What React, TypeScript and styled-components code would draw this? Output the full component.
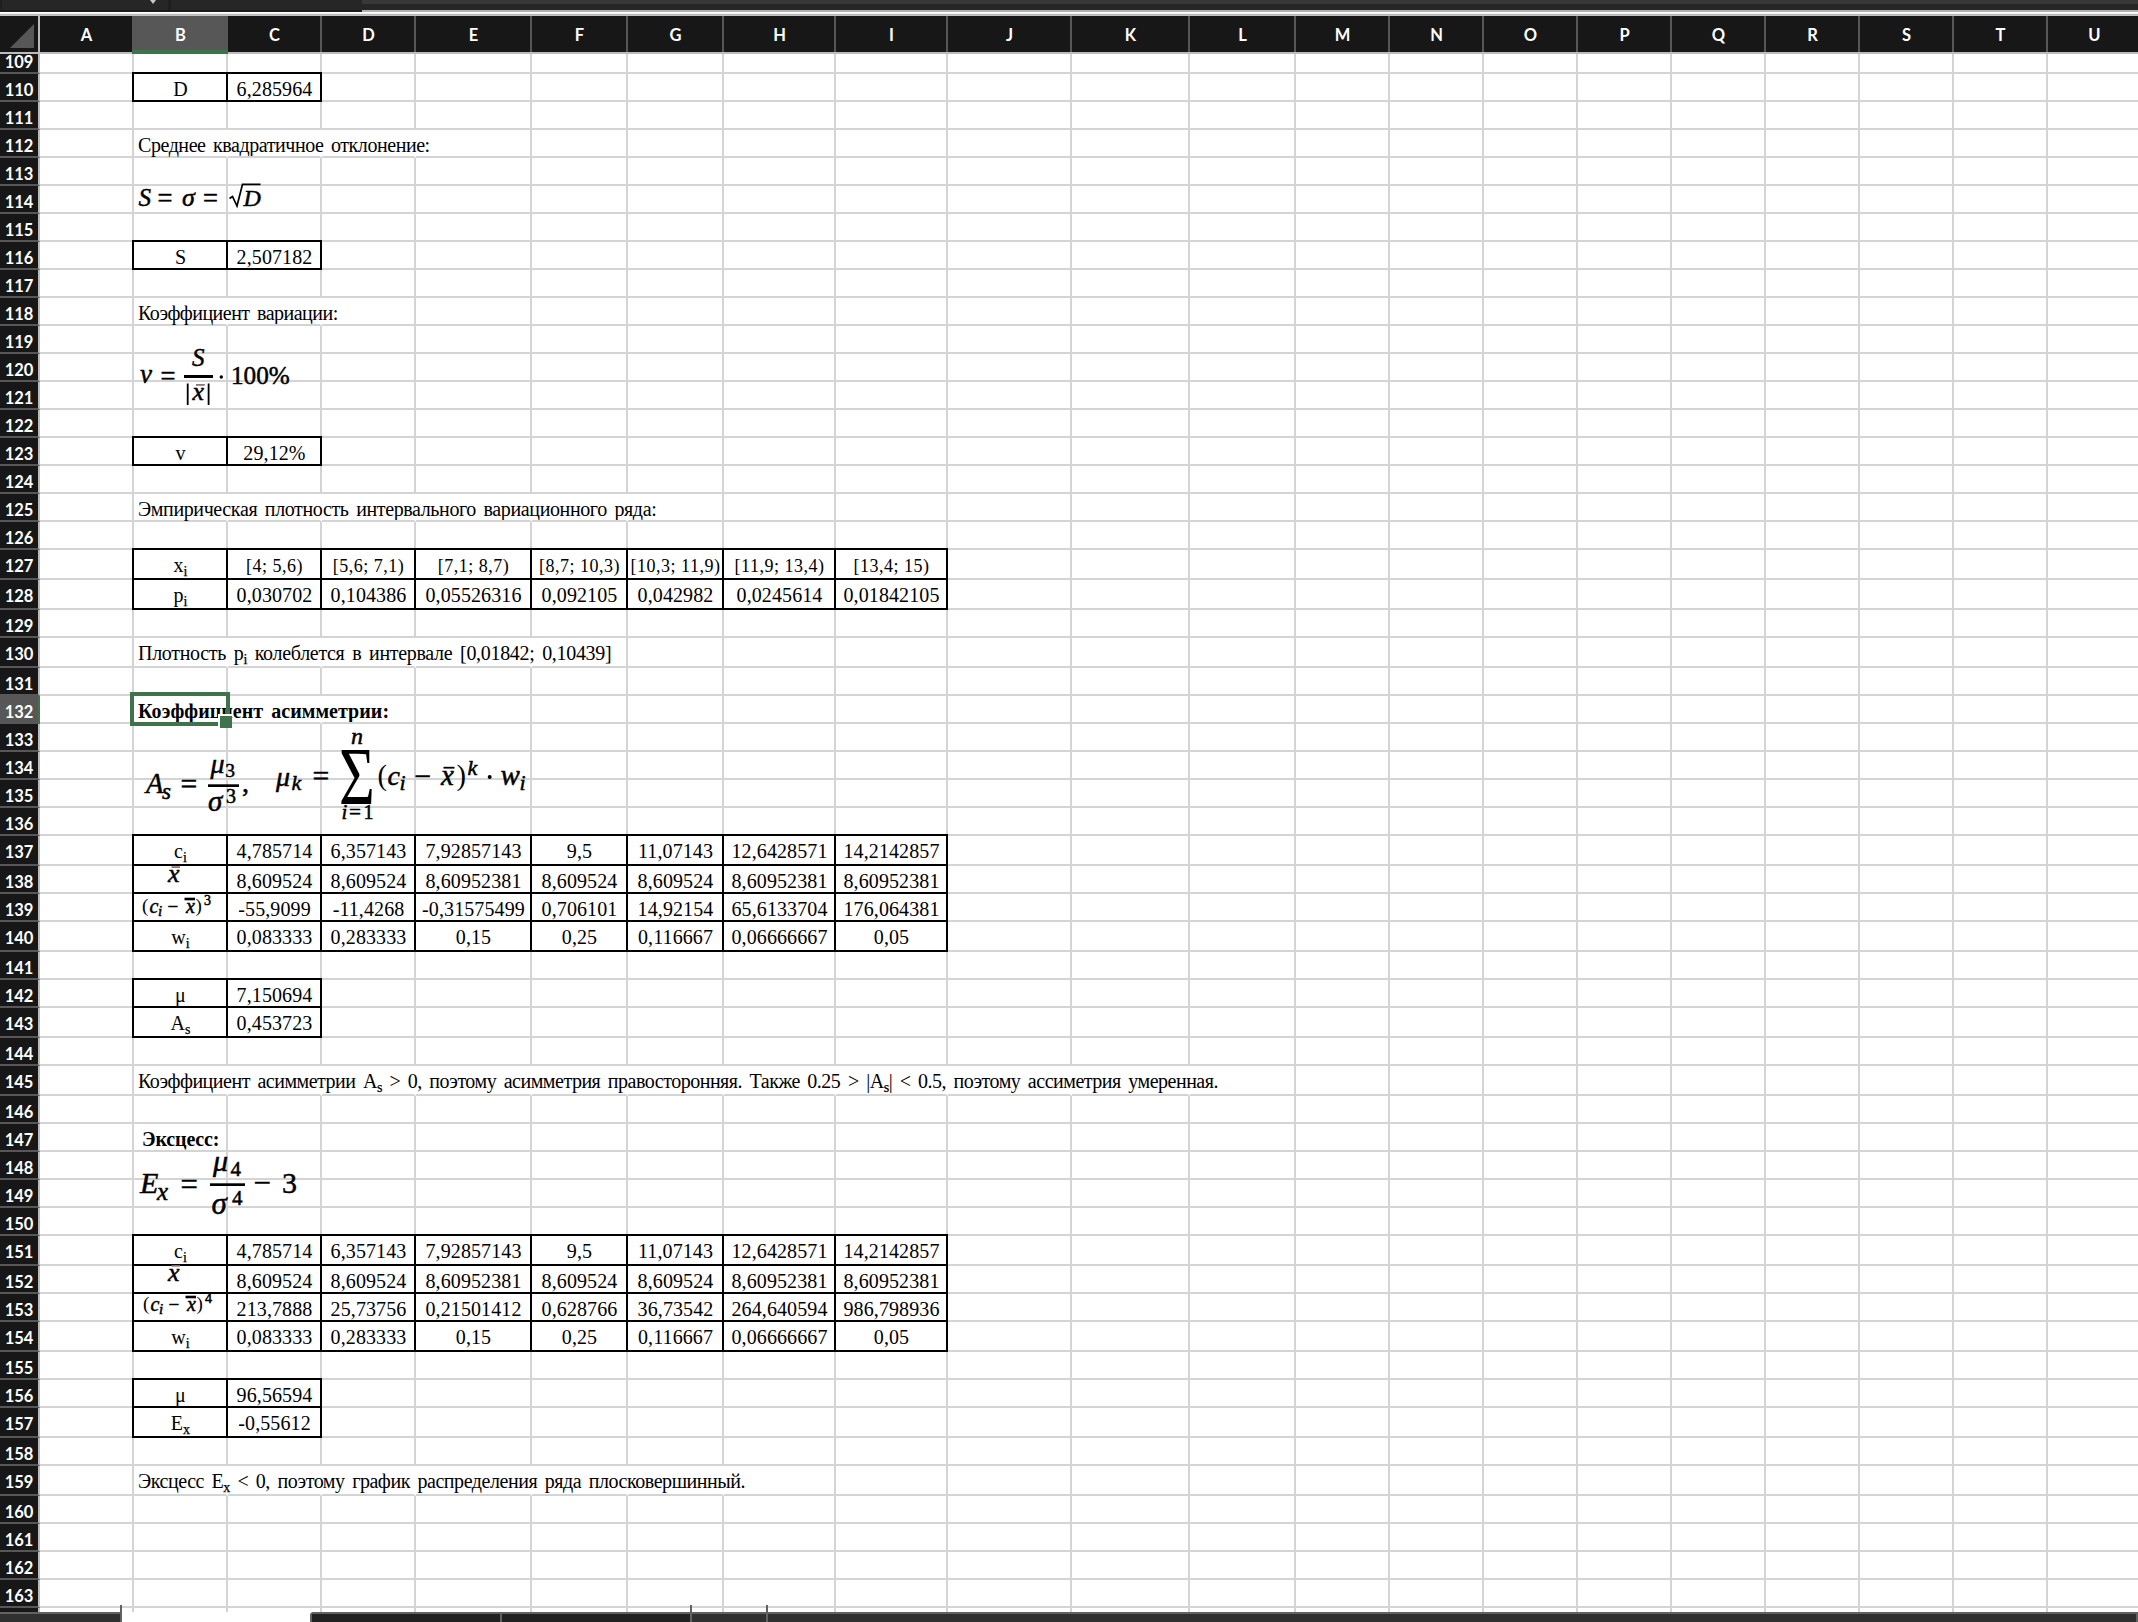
import React from 'react';
import styled, { createGlobalStyle, css } from 'styled-components';

const GREEN = '#3e734b';
const GRID = '#d4d4d4';
const HEAD = '#171717';
const HEAD_ACTIVE = '#575757';
const EDGE = '#bcbcbc';

const Global = createGlobalStyle`
  html, body { margin: 0; padding: 0; background: #fff; }
  * { box-sizing: border-box; }
`;

const Window = styled.div`
  position: relative;
  display: flex;
  flex-direction: column;
  width: 2138px;
  height: 1622px;
  overflow: hidden;
  background: #fff;
`;

/* formula bar remnant above the grid */
const TopBar = styled.div`
  display: flex;
  height: 12px;
  flex: none;
`;
const NameBox = styled.div`
  display: flex;
  justify-content: flex-end;
  width: 171px;
  background: #262626;
  border-left: 2px solid #1e1e1e;
  border-right: 3px solid #1e1e1e;
  border-bottom: 2px solid #1a1a1a;
`;
const Chevron = styled.svg`
  width: 8px;
  height: 4px;
  margin-right: 11px;
`;
const BarButtons = styled.div`
  width: 191px;
  background: #262626;
  border-bottom: 2px solid #1a1a1a;
`;
const BarInput = styled.div`
  flex: 1;
  background: #262626;
  border-top: 4px solid #383838;
  border-bottom: 2px solid #b4b0ae;
`;
const TopEdge = styled.div`
  height: 4px;
  flex: none;
  background: linear-gradient(#fff 0 1px, #f0f0f0 1px 2px, #b9b9b9 2px 3px, #c2c2c2 3px);
`;

const HeaderRow = styled.div`
  display: flex;
  height: 38px;
  flex: none;
  background: ${HEAD};
  border-bottom: 2px solid ${EDGE};
`;
const Corner = styled.div`
  width: 40px;
  flex: none;
  border-right: 2px solid ${EDGE};
`;
const ColHead = styled.div<{ $w: number; $active?: boolean; $plain?: boolean }>`
  width: ${p => p.$w}px;
  flex: none;
  height: 36px;
  padding: 1px 0 0 1px;
  border-right: 2px solid ${p => (p.$plain ? 'transparent' : HEAD_ACTIVE)};
  color: #fff;
  font: 700 16.5px/37px Lato, 'Open Sans', sans-serif;
  text-align: center;
  ${p => p.$active && css`
    height: 38px;
    width: ${p.$w + 2}px;
    margin-left: -2px;
    background: ${HEAD_ACTIVE};
    border-bottom: 4px solid ${GREEN};
    border-right: 0;
  `}
`;

const Sheet = styled.div`
  flex: 1;
  min-height: 0;
  overflow: hidden;
`;
const Row = styled.div<{ $h: number }>`
  display: flex;
  height: ${p => p.$h}px;
`;
const RowHead = styled.div<{ $active?: boolean; $cut?: boolean }>`
  width: 40px;
  flex: none;
  overflow: hidden;
  padding: 3px 0 0 0;
  background: ${p => (p.$active ? HEAD_ACTIVE : HEAD)};
  border-right: 2px solid ${p => (p.$active ? GREEN : EDGE)};
  border-bottom: 2px solid ${HEAD_ACTIVE};
  color: #fff;
  font: 700 16.5px/26px Lato, 'Open Sans', sans-serif;
  text-align: center;
  & > span { display: block; margin-top: ${p => (p.$cut ? -8 : 0)}px; }
`;
const Cell = styled.div<{ $w: number; $boxed?: boolean; $open?: boolean; $left?: boolean; $small?: boolean; $indent?: number }>`
  position: relative;
  width: ${p => p.$w}px;
  flex: none;
  border-right: 2px solid ${p => (p.$open ? 'transparent' : GRID)};
  border-bottom: 2px solid ${GRID};
  padding: 2px 0 0 ${p => (p.$left ? 4 + (p.$indent || 0) : 1)}px;
  color: #000;
  font: ${p => (p.$small ? 18 : 20)}px/26px 'Liberation Serif', 'Times New Roman', serif;
  letter-spacing: ${p => (p.$small ? 0.5 : 0.1)}px;
  text-align: ${p => (p.$left ? 'left' : 'center')};
  white-space: nowrap;
  ${p => p.$small && css`
    padding-top: 3px;
  `}
  ${p => p.$boxed && css`
    border-color: #000;
    box-shadow: -2px -2px 0 #000, -2px 0 0 #000, 0 -2px 0 #000;
  `}
`;
const Label = styled.span<{ $bold?: boolean; $ls?: number }>`
  position: relative;
  display: inline-block;
  height: 23px;
  font-weight: ${p => (p.$bold ? 700 : 400)};
  letter-spacing: ${p => p.$ls || 0}px;
  word-spacing: 3px;
`;
const Sub = styled.sub`
  font-size: 14px;
  line-height: 0;
  vertical-align: -4px;
  -webkit-text-stroke: 0.25px #000;
`;
const Selection = styled.div`
  position: absolute;
  z-index: 2;
  inset: -4px;
  border: 4px solid ${GREEN};
  &::after {
    content: '';
    position: absolute;
    right: -6px;
    bottom: -6px;
    width: 12px;
    height: 12px;
    background: ${GREEN};
    border: solid #fff;
    border-width: 2px 0 0 2px;
  }
`;

const TabBar = styled.div`
  display: flex;
  height: 10px;
  flex: none;
`;
const TabSlot = styled.div<{ $w?: number; $bg: string; $tick?: boolean; $active?: boolean }>`
  position: relative;
  ${p => (p.$w ? `width: ${p.$w}px;` : 'flex: 1;')}
  background: ${p => p.$bg};
  border-top: 2px solid ${p => (p.$active ? '#fff' : '#626262')};
  border-right: 2px solid #626262;
  ${p => p.$tick && css`
    &::after {
      content: '';
      position: absolute;
      right: -2px;
      top: -9px;
      width: 2px;
      height: 9px;
      background: #626262;
    }
  `}
`;

const FormulaSvg = styled.svg`
  position: absolute;
  z-index: 1;
  overflow: visible;
  fill: #000;
  font-family: 'Liberation Serif', 'Times New Roman', serif;
`;
const Glyph = styled.text<{ $s: number; $up?: boolean; $thin?: boolean }>`
  font-size: ${p => p.$s}px;
  font-style: ${p => (p.$up ? 'normal' : 'italic')};
  stroke: #000;
  stroke-width: ${p => (p.$thin ? 0 : 0.5)}px;
`;

const COLS: [string, number][] = [
  ['A', 94], ['B', 94], ['C', 94], ['D', 94], ['E', 116], ['F', 96], ['G', 96], ['H', 112], ['I', 112],
  ['J', 124], ['K', 118], ['L', 106], ['M', 94], ['N', 94], ['O', 94], ['P', 94], ['Q', 94], ['R', 94],
  ['S', 94], ['T', 94], ['U', 94],
];

const TALL = new Set([127, 128, 130, 137, 140, 143, 145, 151, 154, 157, 159]);

type Note = { text: React.ReactNode; until?: number; bold?: boolean; indent?: number; ls?: number };
const sub = (a: string, b: string) => <>{a}<Sub>{b}</Sub></>;

const BOXES: Record<number, React.ReactNode[]> = {
  110: ['D', '6,285964'],
  116: ['S', '2,507182'],
  123: ['v', '29,12%'],
  127: [sub('x', 'i'), '[4; 5,6)', '[5,6; 7,1)', '[7,1; 8,7)', '[8,7; 10,3)', '[10,3; 11,9)', '[11,9; 13,4)', '[13,4; 15)'],
  128: [sub('p', 'i'), '0,030702', '0,104386', '0,05526316', '0,092105', '0,042982', '0,0245614', '0,01842105'],
  137: [sub('c', 'i'), '4,785714', '6,357143', '7,92857143', '9,5', '11,07143', '12,6428571', '14,2142857'],
  138: ['', '8,609524', '8,609524', '8,60952381', '8,609524', '8,609524', '8,60952381', '8,60952381'],
  139: ['', '-55,9099', '-11,4268', '-0,31575499', '0,706101', '14,92154', '65,6133704', '176,064381'],
  140: [sub('w', 'i'), '0,083333', '0,283333', '0,15', '0,25', '0,116667', '0,06666667', '0,05'],
  142: ['μ', '7,150694'],
  143: [sub('A', 's'), '0,453723'],
  151: [sub('c', 'i'), '4,785714', '6,357143', '7,92857143', '9,5', '11,07143', '12,6428571', '14,2142857'],
  152: ['', '8,609524', '8,609524', '8,60952381', '8,609524', '8,609524', '8,60952381', '8,60952381'],
  153: ['', '213,7888', '25,73756', '0,21501412', '0,628766', '36,73542', '264,640594', '986,798936'],
  154: [sub('w', 'i'), '0,083333', '0,283333', '0,15', '0,25', '0,116667', '0,06666667', '0,05'],
  156: ['μ', '96,56594'],
  157: [sub('E', 'x'), '-0,55612'],
};

/* `until` is the last column whose right gridline the overflowing text hides */
const NOTES: Record<number, Note> = {
  112: { text: 'Среднее квадратичное отклонение:', until: 3, ls: -0.44 },
  118: { text: 'Коэффициент вариации:', until: 2, ls: -0.52 },
  125: { text: 'Эмпирическая плотность интервального вариационного ряда:', until: 5, ls: -0.38 },
  130: { text: <>Плотность p<Sub>i</Sub> колеблется в интервале [0,01842; 0,10439]</>, until: 4, ls: -0.31 },
  132: { text: 'Коэффициент асимметрии:', until: 2, bold: true, ls: 0.04 },
  145: {
    text: <>Коэффициент асимметрии A<Sub>s</Sub> &gt; 0, поэтому асимметрия правосторонняя. Также 0.25 &gt; |A<Sub>s</Sub>| &lt; 0.5, поэтому ассиметрия умеренная.</>,
    until: 10,
    ls: -0.49,
  },
  147: { text: 'Эксцесс:', bold: true, indent: 4, ls: -0.15 },
  159: { text: <>Эксцесс E<Sub>x</Sub> &lt; 0, поэтому график распределения ряда плосковершинный.</>, until: 6, ls: -0.45 },
};

function SheetRow({ n }: { n: number }) {
  const cut = n === 109;
  const h = cut ? 20 : TALL.has(n) ? 30 : 28;
  const box = BOXES[n];
  const note = NOTES[n];
  return (
    <Row $h={h}>
      <RowHead $active={n === 132} $cut={cut}><span>{n < 164 ? n : ''}</span></RowHead>
      {COLS.map(([name, w], i) => {
        const value = box && i > 0 ? box[i - 1] : undefined;
        const first = i === 1 && note;
        return (
          <Cell
            key={name}
            $w={w}
            $boxed={value !== undefined}
            $open={!!note && !!note.until && i >= 1 && i <= note.until}
            $left={!!first}
            $indent={first ? note.indent : 0}
            $small={n === 127 && i > 1}
          >
            {value}
            {first && <Label $bold={note.bold} $ls={note.ls}>{note.text}</Label>}
            {n === 132 && i === 1 && <Selection />}
          </Cell>
        );
      })}
    </Row>
  );
}

type G = [string, number, number, number, boolean?];

const isOperator = (t: string) => t === '=' || t === '−';

function Formula({ x, y, w, h, glyphs, children }: {
  x: number; y: number; w: number; h: number; glyphs: G[]; children?: React.ReactNode;
}) {
  return (
    <FormulaSvg style={{ left: x, top: y }} width={w} height={h} viewBox={`${x} ${y} ${w} ${h}`}>
      {glyphs.map(([t, gx, gy, s, up], i) => (
        <Glyph
          key={i}
          x={gx}
          y={isOperator(t) ? gy + s * 0.07 : gy}
          $s={isOperator(t) ? s * 1.06 : s}
          $up={up}
          $thin={t === '(' || t === ')'}
        >
          {t}
        </Glyph>
      ))}
      {children}
    </FormulaSvg>
  );
}

function MeanLabel({ y, barY }: { y: number; barY: number }) {
  return (
    <Formula x={166} y={y - 16} w={16} h={20} glyphs={[['x', 168, y, 26]]}>
      <rect x={171.5} y={barY} width={8.5} height={1.6} fill="#7d6a6a" />
    </Formula>
  );
}

function PowerLabel({ x, y, power }: { x: number; y: number; power: string }) {
  const glyphs: G[] = [
    ['(', x - 1, y - 1.5, 19, true], ['c', x + 6.5, y, 20], ['i', x + 15, y + 3, 15],
    ['−', x + 24.5, y - 1.5, 18, true], ['x', x + 43, y, 20], [')', x + 52.5, y - 1.5, 19, true],
    [power, x + 61, y - 8, 14, true],
  ];
  return (
    <Formula x={x} y={y - 16} w={70} h={22} glyphs={glyphs}>
      <rect x={x + 41.5} y={y - 15.3} width={10.5} height={2.6} />
    </Formula>
  );
}

export default function App() {
  const rows = Array.from({ length: 56 }, (_, i) => 109 + i);
  return (
    <>
      <Global />
      <Window>
        <TopBar>
          <NameBox><Chevron viewBox="0 0 8 4"><path d="M1 0h6L4 4z" fill="#c8c8c8" /></Chevron></NameBox>
          <BarButtons />
          <BarInput />
        </TopBar>
        <TopEdge />
        <HeaderRow>
          <Corner><svg width="38" height="36"><path d="M34 8V32H10Z" fill="#575757" /></svg></Corner>
          {COLS.map(([name, w]) => (
            <ColHead key={name} $w={w} $active={name === 'B'} $plain={name === 'A'}>{name}</ColHead>
          ))}
        </HeaderRow>
        <Sheet>{rows.map(n => <SheetRow key={n} n={n} />)}</Sheet>
        <TabBar>
          <TabSlot $w={122} $bg="#303030" $tick />
          <TabSlot $w={190} $bg="#fff" $active />
          <TabSlot $w={190} $bg="#212121" />
          <TabSlot $w={190} $bg="#212121" $tick />
          <TabSlot $w={76} $bg="#303030" $tick />
          <TabSlot $bg="#303030" />
        </TabBar>

        <Formula x={136} y={180} w={126} h={32} glyphs={[
          ['S', 138.5, 206, 25], ['=', 157.5, 205, 25, true], ['σ', 182, 206, 26], ['=', 203, 205, 25, true], ['D', 243.5, 206, 24],
        ]}>
          <path d="M229.5 198.5L232.5 196.5L237 206L242.5 184.3H260.5" fill="none" stroke="#000" strokeWidth="1.7" />
        </Formula>

        <Formula x={136} y={344} w={158} h={64} glyphs={[
          ['v', 140, 383, 27], ['=', 160.5, 383, 25, true], ['S', 192, 365.7, 25], ['x', 192.5, 399.5, 26], ['100%', 231, 384, 25.2, true],
        ]}>
          <rect x={184} y={375} width={29} height={3} />
          <rect x={186.8} y={383.5} width={1.8} height={21.5} />
          <rect x={207.7} y={383.5} width={1.8} height={21.5} />
          <rect x={196} y={384} width={8.8} height={1.8} fill="#8f7777" />
          <circle cx={221.3} cy={377} r={1.7} />
        </Formula>

        <Formula x={140} y={730} w={390} h={94} glyphs={[
          ['A', 146, 792.7, 28.5], ['s', 162, 799, 23], ['=', 180.5, 792, 28, true],
          ['μ', 210.5, 772.5, 28], ['3', 225.3, 777.3, 19.5, true],
          ['σ', 208, 810.5, 29], ['3', 226, 802.7, 20, true], [',', 242, 792, 28, true],
          ['μ', 276, 785.7, 28], ['k', 291.5, 790, 22], ['=', 312.5, 784, 28, true],
          ['n', 351, 744, 24], ['i', 341.5, 818.7, 21], ['=', 349, 818, 20, true], ['1', 363.5, 818.7, 20, true],
          ['(', 377.5, 784.5, 28.5, true], ['c', 387.5, 785, 28], ['i', 399.5, 790, 22], ['−', 414.5, 784, 28, true],
          ['x', 441, 785, 29], [')', 456.5, 784.5, 28.5, true], ['k', 467.5, 775, 22], ['w', 500.5, 785, 29], ['i', 519.5, 790, 22],
        ]}>
          <g transform="translate(339 804) scale(0.75 1)"><Glyph $s={82} $up $thin>Σ</Glyph></g>
          <rect x={208} y={784.3} width={31} height={2.7} />
          <rect x={443.5} y={766.8} width={11} height={1.8} />
          <circle cx={489.7} cy={777} r={2} />
        </Formula>

        <Formula x={136} y={1150} w={164} h={70} glyphs={[
          ['E', 140, 1192.7, 30], ['x', 157, 1200, 25], ['=', 180.5, 1192.5, 29, true],
          ['μ', 213, 1170.7, 30], ['4', 230.5, 1176, 21, true], ['σ', 211.5, 1214, 31], ['4', 232, 1205.3, 21, true],
          ['−', 253.5, 1191, 29, true], ['3', 282, 1193, 30, true],
        ]}>
          <rect x={210} y={1183.3} width={35} height={2.7} />
        </Formula>

        <MeanLabel y={882} barY={866.3} />
        <MeanLabel y={1281} barY={1265} />
        <PowerLabel x={143} y={913} power="3" />
        <PowerLabel x={144} y={1311} power="4" />
      </Window>
    </>
  );
}
